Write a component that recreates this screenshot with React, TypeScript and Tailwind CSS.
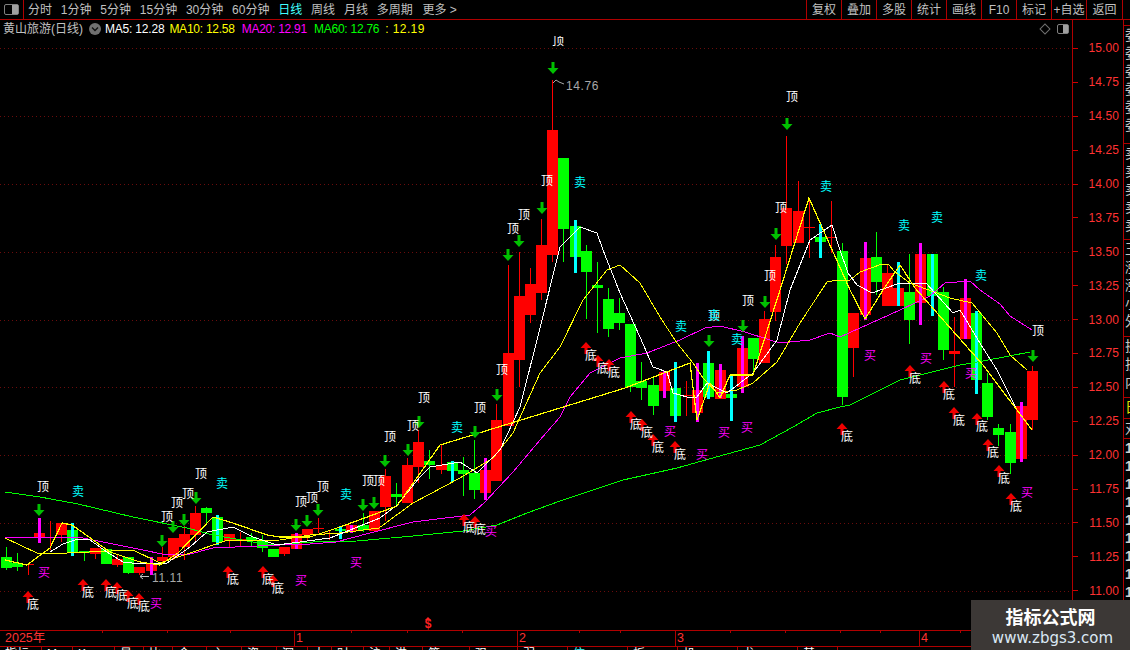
import { Fragment } from "react";

type Bar = [number, number, number, number, "r" | "g", ("m" | "c")?, number?, number?];

// page pixels: wick top, body top, body bottom, wick bottom, colour, overlay bar
const bars: Bar[] = [
  [547, 557, 568, 570, "g"], [553, 563, 567, 571, "g"], [564, 564, 565, 575, "r"],
  [533, 533, 537, 537, "r", "m", 518, 543], [521, 537, 538, 550, "r"], [523, 523, 535, 542, "r"],
  [530, 530, 553, 553, "g", "c", 523, 556], [551, 551, 553, 561, "g"], [548, 548, 554, 559, "r"],
  [549, 549, 564, 564, "g"], [555, 559, 565, 567, "r"], [557, 557, 573, 574, "g"],
  [567, 567, 573, 575, "r"], [563, 563, 571, 571, "r", "m", 557, 575], [547, 557, 561, 564, "r"],
  [538, 538, 557, 560, "r"], [526, 534, 547, 560, "r"], [506, 513, 535, 542, "r"],
  [507, 508, 513, 523, "g"], [517, 517, 542, 542, "g", "c", 515, 545], [534, 534, 541, 548, "r"],
  [532, 539, 540, 547, "r"], [533, 537, 541, 547, "g"], [535, 540, 548, 552, "g"],
  [549, 549, 557, 557, "g"], [547, 547, 554, 556, "r"], [534, 534, 549, 549, "r", "m", 533, 549],
  [529, 529, 535, 540, "r"], [518, 528, 529, 533, "r"], [530, 533, 534, 540, "r"],
  [526, 529, 531, 539, "g", "c", 526, 539], [525, 525, 531, 531, "r", "m", 525, 533],
  [513, 525, 530, 532, "g"], [511, 511, 531, 531, "r"], [469, 476, 507, 521, "r"],
  [483, 494, 497, 507, "g"], [458, 465, 503, 503, "r"], [430, 442, 467, 483, "r"],
  [450, 461, 465, 479, "g"], [445, 465, 470, 474, "r"], [462, 462, 471, 471, "g", "c", 461, 482],
  [457, 470, 474, 496, "g"], [440, 473, 490, 499, "g"], [470, 470, 493, 493, "r", "m", 458, 500],
  [404, 420, 481, 481, "r"], [265, 353, 426, 426, "r"], [252, 296, 360, 387, "r"],
  [268, 284, 315, 323, "r"], [219, 245, 293, 300, "r"], [80, 130, 255, 262, "r"],
  [158, 158, 229, 262, "g"], [226, 226, 257, 257, "g", "c", 220, 273], [245, 251, 272, 319, "g"],
  [262, 285, 288, 333, "g"], [288, 299, 329, 337, "g"], [298, 313, 323, 330, "g"],
  [324, 324, 387, 392, "g"], [362, 381, 388, 400, "g"], [378, 385, 406, 415, "g"],
  [372, 372, 391, 391, "r", "m", 371, 398], [388, 388, 416, 416, "g", "c", 362, 422],
  [381, 395, 396, 416, "r"], [390, 390, 413, 413, "r", "m", 363, 422],
  [363, 363, 397, 397, "g", "c", 351, 399], [370, 370, 399, 399, "r", "m", 364, 398],
  [394, 394, 398, 398, "g", "c", 374, 421], [348, 348, 387, 387, "r", "m", 336, 393],
  [338, 338, 359, 375, "g"], [311, 319, 363, 363, "r"], [245, 257, 312, 321, "r"],
  [136, 208, 246, 264, "r"], [181, 211, 243, 243, "r"], [198, 227, 228, 258, "r"],
  [237, 237, 242, 242, "g", "c", 224, 258], [201, 237, 238, 253, "r"], [243, 251, 397, 405, "g"],
  [313, 313, 348, 377, "r"], [258, 258, 315, 315, "r", "m", 242, 320], [232, 257, 282, 295, "g"],
  [265, 273, 306, 306, "r"], [288, 288, 306, 306, "r", "c", 262, 306], [254, 292, 320, 344, "g"],
  [254, 254, 303, 303, "r", "m", 243, 325], [254, 254, 296, 296, "g", "c", 254, 316],
  [287, 292, 350, 360, "g"], [317, 351, 354, 387, "r"], [298, 298, 339, 339, "r", "m", 279, 339],
  [313, 313, 380, 380, "g", "c", 311, 394], [373, 383, 417, 420, "g"], [424, 428, 435, 446, "g"],
  [424, 432, 463, 474, "g"], [406, 406, 459, 459, "r", "m", 402, 462], [366, 371, 420, 430, "r"],
];

const ma60 = "5,492 40,497 78,504 133,517 187,528 213,535 270,545 313,542 357,541 413,536 463,531 497,525 527,513 560,501 623,480 677,468 727,454 760,445 793,427 817,413 840,407 850,405 900,380 960,365 983,361 1030,352";
const ma20 = "5,537 78,537 133,548 167,555 190,554 213,548 280,545 310,544 336,542 370,533 413,522 470,515 484,503 513,472 540,440 560,417 570,397 590,373 620,358 647,353 680,340 705,328 720,326 745,332 770,340 780,343 810,340 830,333 840,337 860,328 900,310 930,296 945,283 970,281 980,290 1000,304 1010,316 1032,330";
const ma10 = "5,538 37,553 67,553 133,550 160,563 190,553 225,541 280,540 310,535 340,533 379,528 413,503 460,478 493,458 513,433 540,373 560,347 583,300 607,270 620,265 640,283 660,317 677,343 693,363 703,378 717,393 737,390 753,383 777,362 800,323 827,282 838,280 850,280 860,272 882,264 888,264 895,272 910,283 950,298 972,303 997,333 1010,355 1027,370";
const ma5 = "50,552 63,544 78,539 90,540 107,552 123,562 140,564 167,563 190,547 207,532 233,527 253,537 277,545 330,538 380,518 397,505 420,477 430,467 460,462 477,473 500,450 520,407 537,340 560,247 580,227 597,233 603,250 620,293 640,337 653,367 667,372 673,393 687,397 697,397 707,383 727,393 753,373 777,340 790,290 810,240 832,225 840,250 848,273 857,285 872,293 900,283 926,283 953,313 960,310 983,348 997,370 1017,410";
const fast = "5,560 27,565 50,548 62,523 72,525 110,552 140,562 160,565 178,553 213,517 233,523 267,535 280,537 310,537 340,527 397,506 440,445 560,408 625,388 690,363 697,420 710,383 720,398 730,375 753,375 780,290 809,198 850,290 865,319 883,290 900,265 915,288 983,365 1032,430";

const tops = [
  [43, 487], [167, 517], [177, 503], [188, 494], [201, 474], [301, 502], [312, 498], [323, 487],
  [368, 481], [379, 481], [390, 437], [413, 426], [424, 398], [480, 408], [502, 370], [513, 229],
  [524, 215], [547, 181], [558, 41], [714, 316], [748, 301], [770, 276], [781, 208], [792, 97], [1038, 331],
];
const bottoms = [
  [33, 605], [88, 593], [111, 593], [122, 596], [133, 604], [144, 607], [233, 580], [268, 580], [278, 589],
  [469, 528], [480, 530], [591, 356], [603, 369], [614, 373], [636, 425], [647, 433], [658, 448], [680, 455],
  [847, 437], [915, 379], [949, 395], [959, 421], [982, 427], [993, 453], [1004, 479], [1016, 507],
];
const sells = [
  [78, 492], [222, 484], [346, 495], [457, 428], [580, 183], [681, 327], [714, 316], [737, 340],
  [826, 187], [904, 226], [937, 218], [981, 276],
];
const buys = [
  [44, 573], [156, 604], [301, 581], [356, 563], [491, 532], [670, 432], [702, 455], [724, 433],
  [747, 428], [870, 356], [926, 359], [971, 374], [1027, 493],
];
const downArrows = [
  [39, 516], [162, 547], [173, 533], [184, 526], [196, 504], [296, 531], [307, 527], [318, 516],
  [363, 511], [374, 509], [385, 467], [408, 456], [419, 428], [475, 438], [497, 401], [508, 261],
  [519, 247], [542, 214], [553, 74], [709, 347], [743, 332], [765, 308], [776, 240], [787, 130], [1033, 362],
];

const gridPrices = [48, 116, 184, 252, 320, 387, 455, 523, 591];
const axisPrices = ["15.00", "14.75", "14.50", "14.25", "14.00", "13.75", "13.50", "13.25", "13.00", "12.75", "12.50", "12.25", "12.00", "11.75", "11.50", "11.25", "11.00"];
const leftTabs = ["分时", "1分钟", "5分钟", "15分钟", "30分钟", "60分钟", "日线", "周线", "月线", "多周期"];
const rightTabs = ["复权", "叠加", "多股", "统计", "画线", "F10", "标记", "+自选"];
const stripGroups = [
  { h: "h-[118px]", rows: ["委", "委", "委", "委", "委", "委"], color: "text-[#c8c8c8]" },
  { h: "h-[96px]", rows: ["卖", "卖", "卖", "卖", "卖"], color: "text-[#c8c8c8]" },
  { h: "h-[97px]", rows: ["王", "涨", "涨", "小", "外"], color: "text-[#c8c8c8]" },
  { h: "h-[61px]", rows: ["换", "振", "内"], color: "text-[#c8c8c8]" },
  { h: "h-[21px]", rows: ["日"], color: "text-[#e0e000]" },
  { h: "h-[20px]", rows: ["对"], color: "text-[#c8c8c8]" },
];
const bottomTabs = [
  ["指标", 42], ["M", 31], ["K", 42], ["量", 29], ["比", 29], ["金", 34], ["主", 35], ["资", 35], ["深", 31],
  ["大", 24], ["财", 32], ["沪", 26], ["港", 33], ["筹", 47], ["强", 48], ["弱", 50], ["信", 60], ["板", 50],
  ["机", 60], ["龙", 60], ["基", 40],
] as const;
const timeTicks = [102, 167, 230, 351, 407, 462, 579, 620, 730, 785, 840, 880, 960, 1020];

function Candles() {
  return (
    <g shapeRendering="crispEdges">
      {bars.map(([wt, bt, bb, wb, c, o, ot, ob], i) => {
        const left = Math.round(6 + 11.157 * i - 5.5);
        const fill = c === "r" ? "#ff0000" : "#00ff00";
        return (
          <Fragment key={i}>
            <rect x={left + 5} y={wt} width={1} height={wb - wt} fill={fill} />
            <rect x={left} y={bt} width={11} height={Math.max(bb - bt, 1)} fill={fill} />
            {o && ot && ob && (
              <rect x={left + 4} y={ot} width={3} height={ob - ot} fill={o === "m" ? "#ff00ff" : "#00ffff"} />
            )}
          </Fragment>
        );
      })}
    </g>
  );
}

function Marks({ items, text, color }: { items: number[][]; text: string; color: string }) {
  return (
    <>
      {items.map(([x, y], i) => (
        <text key={i} x={x} y={y} fontSize={12} fill={color} textAnchor="middle" dominantBaseline="central">
          {text}
        </text>
      ))}
    </>
  );
}

export default function App() {
  return (
    <div className="relative flex h-[650px] w-[1130px] flex-col overflow-hidden bg-black [font-family:'Liberation_Sans','Noto_Sans_CJK_SC',sans-serif] text-xs text-[#c0c0c0]">
      {/* top toolbar */}
      <div className="flex h-5 shrink-0 border-b border-[#b00000]">
        <div className="flex w-6 items-center justify-center border-r border-[#b00000]">
          <div className="flex h-[11px] w-[15px] justify-end rounded-[2px] border border-[#808080]">
            <div className="w-[6px] bg-[#a0a0a0]" />
          </div>
        </div>
        <div className="flex items-center gap-[8.8px] pl-1">
          {leftTabs.map((t) => (
            <span key={t} className={t === "日线" ? "text-[#40ffff]" : ""}>{t}</span>
          ))}
          <span className="ml-[1px]">更多 &gt;</span>
        </div>
        <div className="ml-auto flex pr-[7px]">
          {rightTabs.map((t) => (
            <span key={t} className="flex w-[35px] items-center justify-center border-l border-[#b00000] whitespace-nowrap">{t}</span>
          ))}
          <span className="flex w-[37px] items-center justify-center border-x border-[#b00000]">返回</span>
        </div>
      </div>

      <div className="flex h-[610px] shrink-0">
        <div className="flex w-[1072px] flex-col">
          {/* indicator legend */}
          <div className="flex h-4 shrink-0 items-center gap-[5px] pl-[3px] pt-[1px]">
            <span>黄山旅游(日线)</span>
            <span className="ml-[1px] flex h-3 w-3 items-center justify-center rounded-full bg-[#707070]">
              <svg width="8" height="6" viewBox="0 0 8 6"><path d="M1 1.5 L4 4.5 L7 1.5" fill="none" stroke="#111" strokeWidth="1.4" /></svg>
            </span>
            <span className="ml-[-1px] tracking-[-0.2px] text-white">MA5: 12.28</span>
            <span className="tracking-[-0.25px] text-[#ffff00]">MA10: 12.58</span>
            <span className="ml-[2px] tracking-[-0.25px] text-[#ff00ff]">MA20: 12.91</span>
            <span className="ml-[2px] tracking-[-0.25px] text-[#00ff00]">MA60: 12.76</span>
            <span className="ml-[1px] whitespace-pre tracking-[0.4px] text-[#ffff00]">: 12.19</span>
            <span className="ml-auto h-[8px] w-[8px] rotate-45 border border-[#707070]" />
            <span className="mx-[3px] ml-[3px] flex h-[10px] w-3 justify-end rounded-[2px] border border-[#808080]">
              <span className="w-[5px] bg-[#a0a0a0]" />
            </span>
          </div>

          {/* candlestick chart */}
          <svg width="1072" height="594" viewBox="0 36 1072 594" className="block">
            {gridPrices.map((y) => (
              <line key={y} x1="0" x2="1072" y1={y + 0.5} y2={y + 0.5} stroke="#6a0c0c" strokeDasharray="1 3" />
            ))}
            <Candles />
            <g fill="none" shapeRendering="crispEdges">
              <polyline points={ma60} stroke="#00ff00" strokeWidth="1" />
              <polyline points={ma20} stroke="#ff00ff" strokeWidth="1" />
              <polyline points={ma10} stroke="#ffff00" strokeWidth="1" />
              <polyline points={ma5} stroke="#ffffff" strokeWidth="1" />
              <polyline points={fast} stroke="#ffff00" strokeWidth="1.2" />
            </g>
            {downArrows.map(([x, y], i) => (
              <polygon key={i} fill="#00c000" points={`${x - 1.5},${y - 12} ${x + 1.5},${y - 12} ${x + 1.5},${y - 6} ${x + 5.5},${y - 6} ${x},${y} ${x - 5.5},${y - 6} ${x - 1.5},${y - 6}`} />
            ))}
            {bottoms.map(([lx, ly], i) => {
              const x = lx - 5;
              const y = ly - 14;
              return (
                <polygon key={i} fill="#f00000" points={`${x},${y} ${x + 5.5},${y + 6} ${x + 1.5},${y + 6} ${x + 1.5},${y + 12} ${x - 1.5},${y + 12} ${x - 1.5},${y + 6} ${x - 5.5},${y + 6}`} />
              );
            })}
            <Marks items={tops} text="顶" color="#ffffff" />
            <Marks items={bottoms} text="底" color="#ffffff" />
            <Marks items={sells} text="卖" color="#00ffff" />
            <Marks items={buys} text="买" color="#ff00ff" />
            <path d="M140 576.5 H149 M140 576.5 l3 -2.5 M140 576.5 l3 2.5" fill="none" stroke="#c0c0c0" />
            <text x="152" y="582" fontSize="12" letterSpacing="0.6" fill="#a8a8a8">11.11</text>
            <path d="M553 83 l3 -3 l3 2 l5 2" fill="none" stroke="#a8a8a8" />
            <text x="566" y="90" fontSize="12" letterSpacing="0.6" fill="#a8a8a8">14.76</text>
            <text x="428" y="628" fontSize="12" fontWeight="700" fill="#ff2020" textAnchor="middle">$</text>
            <polygon points="428,617 431,620 425,620" fill="#ff2020" />
          </svg>
        </div>

        {/* price axis */}
        <div className="w-[51px] shrink-0 border-l border-[#b00000] pt-[11.5px]">
          {axisPrices.map((p) => (
            <div key={p} className="flex h-[33.9px] items-center justify-between pr-[4px] text-[#ff3232]">
              <span className="h-px w-[5px] bg-[#d00000]" />
              <span className="tracking-[0.1px]">{p}</span>
            </div>
          ))}
        </div>

        {/* right panel, cut off by the window */}
        <div className="flex-1 overflow-hidden border-l border-[#b00000] pt-[5px]">
          {stripGroups.map((g, i) => (
            <div key={i} className={`${g.h} overflow-hidden border-t border-[#b00000] pl-[1px] text-[14px] leading-[18px] ${g.color}`}>
              {g.rows.map((r, j) => <div key={j}>{r}</div>)}
            </div>
          ))}
          <div className="border-t border-[#b00000] pl-[1px] text-[14px] font-bold leading-[18px] text-[#d0d0d0]">
            {Array.from({ length: 9 }).map((_, i) => <div key={i}>1</div>)}
          </div>
        </div>
      </div>

      {/* time axis */}
      <div className="relative flex h-[17px] shrink-0 border-y border-[#b00000] text-[12.5px] leading-[15px] text-[#ff3232]">
        <span className="w-[294px] pl-[5px]">2025年</span>
        <span className="w-[223px] border-l border-[#b00000] pl-[1px]">1</span>
        <span className="w-[158px] border-l border-[#b00000] pl-[1px]">2</span>
        <span className="w-[244px] border-l border-[#b00000] pl-[1px]">3</span>
        <span className="border-l border-[#b00000] pl-[1px]">4</span>
        <svg className="absolute left-0 top-0" width="1130" height="3">
          {timeTicks.map((x) => <line key={x} x1={x + 0.5} x2={x + 0.5} y1="0" y2="2" stroke="#b00000" />)}
        </svg>
      </div>

      {/* bottom tabs, almost fully cut off */}
      <div className="flex h-[3px] overflow-hidden text-xs leading-[14px]">
        {bottomTabs.map(([t, w], i) => (
          <span key={i} style={{ width: w }} className={`shrink-0 border-r border-[#b00000] pl-[5px] ${t === "信" ? "text-[#40ffff]" : "text-white"}`}>{t}</span>
        ))}
      </div>

      {/* site watermark */}
      <div className="absolute bottom-0 right-0 flex h-[50px] w-[159px] flex-col items-center bg-[#3c3836] pt-[3px]">
        <span className="text-[18px] font-bold leading-[26px] text-white [font-family:'Noto_Sans_CJK_SC',sans-serif]">指标公式网</span>
        <span className="ml-[4px] text-[15px] leading-[18px] text-[#dbe8f5] [font-family:'DejaVu_Sans',sans-serif]">www.zbgs3.com</span>
      </div>
    </div>
  );
}
